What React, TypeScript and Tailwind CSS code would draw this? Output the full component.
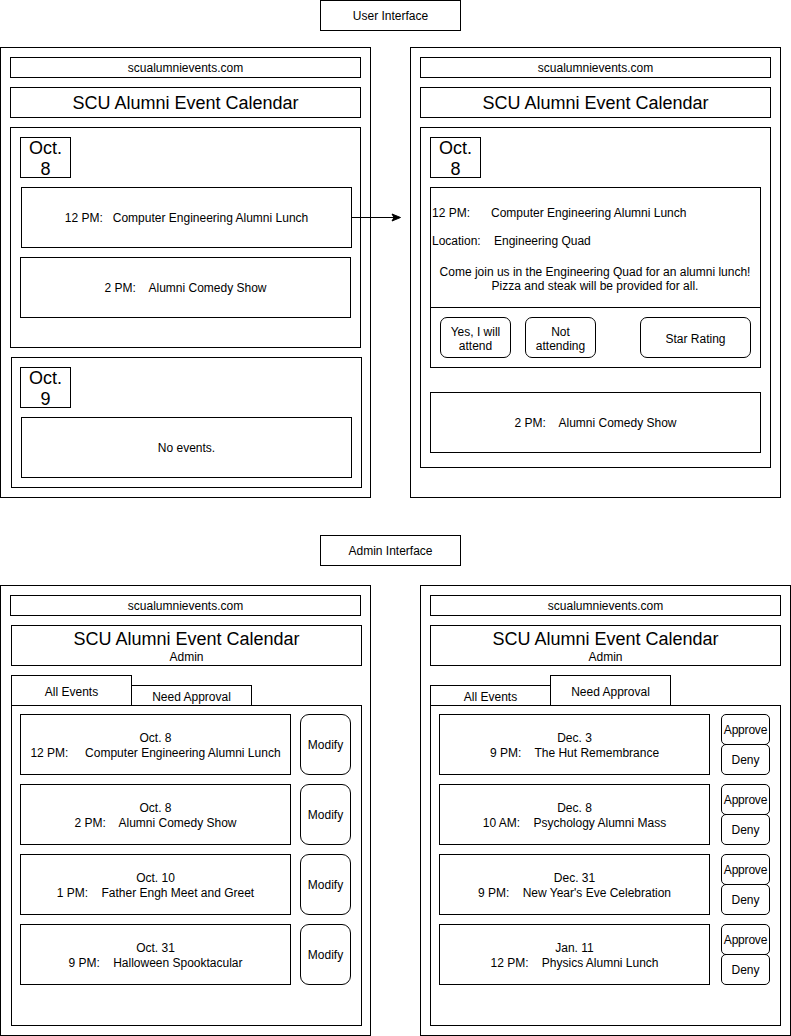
import React from 'react';

const box = 'border border-black box-border';

function Label({ text, className }: { text: string; className?: string }) {
  return (
    <div className={`${box} ml-[320px] w-[141px] h-[31px] pt-[2px] flex items-center justify-center ${className ?? ''}`}>
      {text}
    </div>
  );
}

function UrlBar({ ml = 9 }: { ml?: number }) {
  return (
    <div className={`${box} ${ml === 9 ? 'ml-[9px]' : 'ml-[10px]'} mt-[9px] w-[351px] h-[21px] pt-[2px] flex items-center justify-center`}>
      scualumnievents.com
    </div>
  );
}

function DateBox({ day, className }: { day: string; className?: string }) {
  return (
    <div className={`${box} w-[51px] h-[41px] pt-[2px] flex flex-col items-center justify-center text-[18px] leading-[21px] ${className ?? ''}`}>
      <span>Oct.</span>
      <span>{day}</span>
    </div>
  );
}

function EventBox({ time, title, className }: { time: string; title: string; className?: string }) {
  return (
    <div className={`${box} w-[331px] h-[61px] pt-[2px] flex items-center justify-center whitespace-pre ${className ?? ''}`}>
      {time}
      {title}
    </div>
  );
}

function UserList() {
  return (
    <div className={`${box} w-[371px] h-[451px] flex flex-col`}>
      <UrlBar />
      <div className={`${box} ml-[9px] mt-[9px] w-[351px] h-[31px] pt-[2px] flex items-center justify-center text-[18px]`}>
        SCU Alumni Event Calendar
      </div>
      <div className={`${box} ml-[9px] mt-[9px] w-[351px] h-[221px] flex flex-col`}>
        <DateBox day="8" className="ml-[9px] mt-[9px]" />
        <EventBox time="12 PM:   " title="Computer Engineering Alumni Lunch" className="ml-[10px] mt-[9px]" />
        <EventBox time="2 PM:    " title="Alumni Comedy Show" className="ml-[9px] mt-[9px]" />
      </div>
      <div className={`${box} ml-[10px] mt-[9px] w-[351px] h-[131px] flex flex-col`}>
        <DateBox day="9" className="ml-[8px] mt-[9px]" />
        <div className={`${box} ml-[9px] mt-[9px] w-[331px] h-[61px] pt-[2px] flex items-center justify-center`}>
          No events.
        </div>
      </div>
    </div>
  );
}

function UserDetail() {
  return (
    <div className={`${box} ml-[39px] w-[371px] h-[451px] flex flex-col`}>
      <UrlBar />
      <div className={`${box} ml-[9px] mt-[9px] w-[351px] h-[31px] pt-[2px] flex items-center justify-center text-[18px]`}>
        SCU Alumni Event Calendar
      </div>
      <div className={`${box} ml-[9px] mt-[9px] w-[351px] h-[341px] flex flex-col`}>
        <DateBox day="8" className="ml-[9px] mt-[9px]" />
        <div className={`${box} ml-[9px] mt-[9px] w-[331px] h-[181px] flex flex-col`}>
          <div className="h-[120px] border-b border-black pl-[1px] pt-[18px]">
            <div className="flex">
              <span className="w-[59px]">12 PM:</span>
              <span>Computer Engineering Alumni Lunch</span>
            </div>
            <div className="flex mt-[14px]">
              <span className="w-[62px]">Location:</span>
              <span>Engineering Quad</span>
            </div>
            <div className="mt-[16px] text-center pr-[2px]">
              <div>Come join us in the Engineering Quad for an alumni lunch!</div>
              <div>Pizza and steak will be provided for all.</div>
            </div>
          </div>
          <div className="flex pt-[9px]">
            <div className={`${box} ml-[9px] w-[71px] h-[41px] pt-[3px] rounded-[7px] flex flex-col items-center justify-center text-center`}>
              <span>Yes, I will</span>
              <span>attend</span>
            </div>
            <div className={`${box} ml-[14px] w-[71px] h-[41px] pt-[3px] rounded-[7px] flex flex-col items-center justify-center text-center`}>
              <span>Not</span>
              <span>attending</span>
            </div>
            <div className={`${box} ml-[44px] w-[111px] h-[41px] pt-[3px] rounded-[7px] flex items-center justify-center`}>
              Star Rating
            </div>
          </div>
        </div>
        <EventBox time="2 PM:    " title="Alumni Comedy Show" className="ml-[9px] mt-[24px]" />
      </div>
    </div>
  );
}

function AdminHeader({ leftActive }: { leftActive: boolean }) {
  return (
    <>
      <div className={`${box} ml-[9px] mt-[9px] w-[351px] h-[41px] pt-[3px] flex flex-col items-center justify-center`}>
        <span className="text-[18px] leading-[21px]">SCU Alumni Event Calendar</span>
        <span className="leading-[15px]">Admin</span>
      </div>
      <div className="ml-[9px] mt-[9px] h-[30px] flex items-end">
        <div
          className={`border-t border-l border-r border-black box-border w-[121px] pt-[3px] flex items-center justify-center ${
            leftActive ? 'h-[30px]' : 'h-[20px]'
          }`}
        >
          All Events
        </div>
        <div
          className={`border-t border-l border-r border-black box-border -ml-[1px] w-[121px] pt-[3px] flex items-center justify-center ${
            leftActive ? 'h-[20px]' : 'h-[30px]'
          }`}
        >
          Need Approval
        </div>
      </div>
    </>
  );
}

const allEvents = [
  { date: 'Oct. 8', time: '12 PM:     ', title: 'Computer Engineering Alumni Lunch' },
  { date: 'Oct. 8', time: '2 PM:    ', title: 'Alumni Comedy Show' },
  { date: 'Oct. 10', time: '1 PM:    ', title: 'Father Engh Meet and Greet' },
  { date: 'Oct. 31', time: '9 PM:    ', title: 'Halloween Spooktacular' },
];

const pending = [
  { date: 'Dec. 3', time: '9 PM:    ', title: 'The Hut Remembrance' },
  { date: 'Dec. 8', time: '10 AM:    ', title: 'Psychology Alumni Mass' },
  { date: 'Dec. 31', time: '9 PM:    ', title: "New Year's Eve Celebration" },
  { date: 'Jan. 11', time: '12 PM:    ', title: 'Physics Alumni Lunch' },
];

function AdminEvent({ date, time, title }: { date: string; time: string; title: string }) {
  return (
    <div className={`${box} w-[271px] h-[61px] pt-[3px] flex flex-col items-center justify-center leading-[15px] whitespace-pre`}>
      <span>{date}</span>
      <span>
        {time}
        {title}
      </span>
    </div>
  );
}

function AdminAll() {
  return (
    <div className={`${box} w-[371px] h-[451px] flex flex-col`}>
      <UrlBar />
      <div className="ml-[1px]">
        <AdminHeader leftActive />
      </div>
      <div className={`${box} ml-[10px] w-[351px] h-[321px] flex flex-col gap-[9px] pt-[8px]`}>
        {allEvents.map((e, i) => (
          <div key={i} className="flex ml-[8px]">
            <AdminEvent {...e} />
            <div className={`${box} ml-[9px] w-[51px] h-[61px] pt-[2px] rounded-[9px] flex items-center justify-center`}>
              Modify
            </div>
          </div>
        ))}
      </div>
    </div>
  );
}

function AdminPending() {
  return (
    <div className={`${box} ml-[49px] w-[371px] h-[451px] flex flex-col`}>
      <UrlBar />
      <AdminHeader leftActive={false} />
      <div className={`${box} ml-[9px] w-[351px] h-[321px] flex flex-col gap-[9px] pt-[8px]`}>
        {pending.map((e, i) => (
          <div key={i} className="flex ml-[8px]">
            <AdminEvent {...e} />
            <div className="ml-[11px] flex flex-col">
              <div className={`${box} w-[49px] h-[31px] pt-[2px] rounded-[5px] flex items-center justify-center tracking-[-0.2px]`}>
                Approve
              </div>
              <div className={`${box} -mt-[1px] w-[49px] h-[31px] pt-[2px] rounded-[5px] flex items-center justify-center`}>
                Deny
              </div>
            </div>
          </div>
        ))}
      </div>
    </div>
  );
}

export default function App() {
  return (
    <div className="w-[791px] h-[1036px] bg-white overflow-hidden text-black text-[12px] leading-[1.2] font-['Liberation_Sans',Arial,sans-serif]">
      <Label text="User Interface" />
      <div className="relative flex mt-[16px]">
        <UserList />
        <UserDetail />
        {/* connector arrow from the first event to the detail view */}
        <svg className="absolute left-[352px] top-[166px]" width="49" height="9" viewBox="0 0 49 9">
          <line x1="0" y1="4.5" x2="42" y2="4.5" stroke="black" strokeWidth="1" />
          <polygon points="48.5,4.5 40,1 42,4.5 40,8" fill="black" stroke="black" strokeWidth="1" />
        </svg>
      </div>
      <Label text="Admin Interface" className="mt-[37px]" />
      <div className="flex mt-[19px]">
        <AdminAll />
        <AdminPending />
      </div>
    </div>
  );
}
